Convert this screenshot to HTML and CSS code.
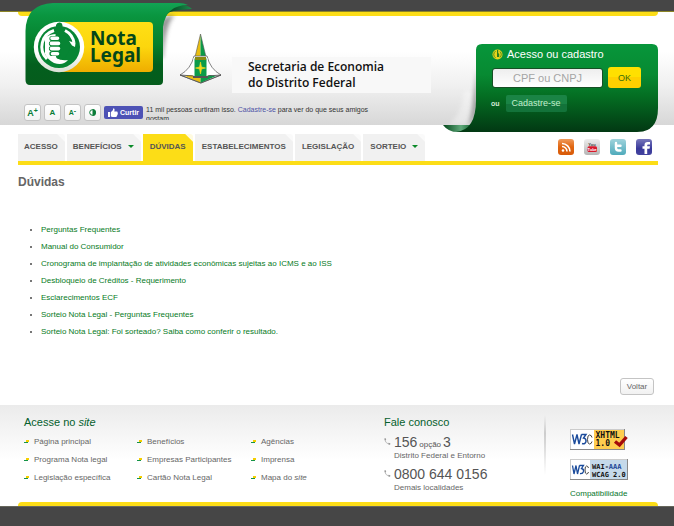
FILE: index.html
```html
<!DOCTYPE html>
<html lang="pt-BR">
<head>
<meta charset="utf-8">
<meta name="viewport" content="width=device-width, initial-scale=1">
<title>Nota Legal - Dúvidas</title>
<link rel="stylesheet" href="styles.css">
</head>
<body>
<div class="bar bar-top"></div>
<header class="header">
  <div class="wrap">
    <div class="strip strip-top"></div>
    <div class="header-main">
      <div class="brand">
        <div class="brand-row">
          <a class="logo" href="#">
            <svg width="172" height="92" viewBox="24 2 172 92" role="img" aria-label="Nota Legal">
              <defs>
                <linearGradient id="lg" x1="0" y1="0" x2="0" y2="1"><stop offset="0" stop-color="#12a354"/><stop offset=".15" stop-color="#0a9640"/><stop offset=".5" stop-color="#067f2c"/><stop offset=".75" stop-color="#035f1e"/><stop offset="1" stop-color="#055c1c"/></linearGradient>
                <linearGradient id="curl" x1="0" y1="0" x2="1" y2="0"><stop offset="0" stop-color="#063d18"/><stop offset=".45" stop-color="#0b5a2c"/><stop offset="1" stop-color="#1c8d4c"/></linearGradient>
                <linearGradient id="yl" x1="0" y1="0" x2="0" y2="1"><stop offset="0" stop-color="#ffe016"/><stop offset=".5" stop-color="#fcd60d"/><stop offset="1" stop-color="#efad00"/></linearGradient>
                <linearGradient id="wh" x1="0" y1="0" x2="0" y2="1"><stop offset=".6" stop-color="#fff"/><stop offset="1" stop-color="#d9e0d5"/></linearGradient>
                <filter id="soft" x="-50%" y="-20%" width="200%" height="140%"><feGaussianBlur stdDeviation="2"/></filter>
              </defs>
              <path d="M161 58V22q2-6 14-7-9 6-12 43z" fill="#666" opacity=".7" filter="url(#soft)"/>
              <path d="M162 24Q163 9 181 5q7 0 11 4-16 1-22 3-6 3-8 12z" fill="url(#curl)"/>
              <path d="M25.500 80V31Q26 4 53 3h126q5 0 9 2-22 0-25 22v54q0 4-4 4H30q-4.500 0-4.500-5z" fill="url(#lg)"/>
              <rect x="58" y="22" width="95" height="50" rx="4" fill="url(#yl)"/>
              <circle cx="59" cy="47" r="25.200" fill="url(#wh)"/>
              <circle cx="59" cy="47" r="21" fill="#078534"/>
              <path d="M54 30.500A17 17 0 0 0 47 59M65 30.500a17 17 0 0 1 9 12.500" fill="none" stroke="#fff" stroke-width="3"/>
              <path d="M69 41l6.500 2-.5 4-3-1.500z" fill="#fff"/>
              <path d="M45 38q4-4 12-4v24q4 3 11 2-5 6-14 3-6-3-9-9z" fill="#fff"/>
              <path d="M56 25q1-3 4-2.500 2.500.5 2.500 3V35q5 2 7 8 1 8-4 14-5 4-9 1l-1-3q4-14 0-19z" fill="#078534"/>
              <path d="M52 38.500h5.500M51.500 43.500h7M51.500 48.500h7M52 53.500h6" stroke="#078534" stroke-width="5.200" stroke-linecap="round"/>
              <path d="M52 38.200h5.500M51.500 43.400h7M51.500 48.600h7M52.500 53.800h5" stroke="#fff" stroke-width="3.600" stroke-linecap="round"/>
              <g class="logo-text"><text x="90" y="45">Nota</text><text x="90" y="62">Legal</text></g>
            </svg>
          </a>
          <svg class="crest" width="42" height="52" viewBox="0 0 42 52" role="img" aria-label="Distrito Federal">
            <path d="M21.500 1L16 24h5.500z" fill="#e9be12"/><path d="M21.500 1L27 24h-5.500z" fill="#0a9b49"/>
            <path d="M21.500 1L16 24M21.500 1L27 24" stroke="#555" stroke-width=".6" fill="none"/>
            <path d="M15 23Q12 36 1 42l20.500 8L42 42Q31 36 28 23z" fill="#fff" stroke="#666" stroke-width=".8"/>
            <path d="M6 43l6-1 9.500 3V50z" fill="#e9be12"/><path d="M37 43l-6-1-9.500 3V50z" fill="#0a9b49"/>
            <path d="M1 42l14 1h13l14-1-20 8z" fill="none" stroke="#555" stroke-width=".9"/>
            <path d="M15 25h13v19H15z" fill="#0a9b49" stroke="#fff" stroke-width="1"/>
            <path d="M16 24h11v3H16z" fill="#8a8a12"/><path d="M14 43h15v2H14z" fill="#555"/>
            <path d="M21.500 29l1 5 4 1-4 1-1 5-1-5-4-1 4-1z" fill="#f3d91a" stroke="#f3d91a" stroke-width=".6"/>
          </svg>
          <p class="agency">Secretaria de Economia<br>do Distrito Federal</p>
        </div>
        <div class="tools">
          <button class="tool" type="button" aria-label="Aumentar fonte"><span class="size-l">A</span><sup>+</sup></button>
          <button class="tool" type="button" aria-label="Fonte normal"><span class="size-m">A</span></button>
          <button class="tool" type="button" aria-label="Diminuir fonte"><span class="size-s">A</span><sup>-</sup></button>
          <button class="tool" type="button" aria-label="Contraste"><svg width="7" height="7" viewBox="0 0 7 7"><circle cx="3.500" cy="3.500" r="2.800" fill="#fff" stroke="#0a7d38" stroke-width="1"/><path d="M3.500 0a3.500 3.500 0 0 1 0 7z" fill="#0a7d38"/></svg></button>
          <button class="like" type="button"><svg width="10" height="9" viewBox="0 0 10 9"><path d="M0 4h2v5H0zM2.800 4.200L5 2V.5Q6.600 0 6.600 1.800L6.300 3.500H9q1 .3.600 1.300.6.700 0 1.500.2.900-.6 1.300 0 1.200-1 1.400H4.600L2.800 8.500z" fill="#fff"/></svg>Curtir</button>
          <p class="like-text">11 mil pessoas curtiram isso. <a href="#">Cadastre-se</a> para ver do que seus amigos gostam.</p>
        </div>
      </div>
      <form class="login">
        <svg class="login-bg" width="216" height="90" viewBox="0 0 216 90" aria-hidden="true">
          <defs>
            <linearGradient id="pg" x1="0" y1="0" x2="0" y2="1"><stop offset="0" stop-color="#07963b"/><stop offset=".35" stop-color="#078a32"/><stop offset=".6" stop-color="#046d22"/><stop offset="1" stop-color="#023813"/></linearGradient>
            <linearGradient id="pc" x1="0" y1="0" x2="1" y2="0"><stop offset="0" stop-color="#02461a"/><stop offset=".6" stop-color="#5fa97a"/><stop offset="1" stop-color="#0e602b"/></linearGradient>
            <filter id="blur" x="-100%" y="-20%" width="300%" height="140%"><feGaussianBlur stdDeviation="2"/></filter>
            <clipPath id="above"><path d="M0 0h40v81H0z"/></clipPath>
          </defs>
          <g clip-path="url(#above)"><path d="M6 81q14-10 16-34h8q0 22-6 34z" fill="#fff" opacity=".35" filter="url(#blur)"/><path d="M35 24v36q-1 14-8 22 4-14 5-30z" fill="#888" filter="url(#blur)"/></g>
          <path d="M1 81h30l-3 7H18Q7 89 1 81z" fill="url(#pc)"/>
          <path d="M34 6q0-6 6-6h170q6 0 6 6v58q0 24-21 24H14q20-2 20-32z" fill="url(#pg)"/>
        </svg>
        <h2 class="login-title"><svg width="11" height="11" viewBox="0 0 11 11" aria-hidden="true"><circle cx="5.500" cy="5.500" r="5" fill="#e9d51b"/><path d="M3.500 2.200a4 4 0 0 0 0 6.600M8 2.600a4 4 0 0 1 0 5.800" fill="none" stroke="#2c7d1e" stroke-width=".8"/><path d="M5 1h1.200v3l1 1v3H5z" fill="#2c7d1e"/></svg><label for="doc">Acesso ou cadastro</label></h2>
        <div class="login-row">
          <input id="doc" class="doc" type="text" placeholder="CPF ou CNPJ">
          <button class="ok" type="submit">OK</button>
        </div>
        <div class="login-alt"><span>ou</span><a class="signup" href="#">Cadastre-se</a></div>
      </form>
    </div>
  </div>
</header>

<div class="wrap">
  <div class="navbar">
    <nav class="tabs">
      <a class="tab" href="#">ACESSO</a>
      <a class="tab has-menu" href="#">BENEFÍCIOS</a>
      <a class="tab current" href="#">DÚVIDAS</a>
      <a class="tab" href="#">ESTABELECIMENTOS</a>
      <a class="tab" href="#">LEGISLAÇÃO</a>
      <a class="tab has-menu" href="#">SORTEIO</a>
    </nav>
    <div class="social">
      <a class="rss" href="#" aria-label="RSS"><svg width="16" height="16" viewBox="0 0 16 16"><circle cx="5" cy="11.500" r="1.300" fill="#fff"/><path d="M4 7.500a5 5 0 0 1 5 5M4 4.500a8 8 0 0 1 8 8" stroke="#fff" stroke-width="1.600" fill="none"/></svg></a>
      <a class="youtube" href="#" aria-label="YouTube"><svg width="16" height="16" viewBox="0 0 16 16"><rect x="3.500" y="7.200" width="9.500" height="5.800" rx="1.500" fill="#d8182b"/><text x="8" y="6.600" class="yt-you">You</text><text x="8.200" y="11.600" class="yt-tube">Tube</text></svg></a>
      <a class="twitter" href="#" aria-label="Twitter"><svg width="16" height="16" viewBox="0 0 16 16"><path d="M6 4v5q0 2.500 2.500 2.500h2M6 6.700h4.500" stroke="#fff" stroke-width="2.400" stroke-linecap="round" fill="none"/></svg></a>
      <a class="facebook" href="#" aria-label="Facebook"><svg width="16" height="16" viewBox="0 0 16 16"><path d="M8.500 15V9.800h-2V7.200h2V6q0-3 3-3H14v2.500h-1.800q-1 0-1 1v.7H14l-.4 2.600h-2.400V15z" fill="#fff"/></svg></a>
    </div>
  </div>

  <main class="content">
    <h1>Dúvidas</h1>
    <ul class="faq">
      <li><a href="#">Perguntas Frequentes</a></li>
      <li><a href="#">Manual do Consumidor</a></li>
      <li><a href="#">Cronograma de implantação de atividades econômicas sujeitas ao ICMS e ao ISS</a></li>
      <li><a href="#">Desbloqueio de Créditos - Requerimento</a></li>
      <li><a href="#">Esclarecimentos ECF</a></li>
      <li><a href="#">Sorteio Nota Legal - Perguntas Frequentes</a></li>
      <li><a href="#">Sorteio Nota Legal: Foi sorteado? Saiba como conferir o resultado.</a></li>
    </ul>
    <button class="back" type="button">Voltar</button>
  </main>
</div>

<footer class="footer">
  <div class="wrap">
    <div class="footer-main">
      <section class="sitemap">
        <h2>Acesse no <em>site</em></h2>
        <ul>
          <li><a href="#">Página principal</a></li>
          <li><a href="#">Benefícios</a></li>
          <li><a href="#">Agências</a></li>
          <li><a href="#">Programa Nota legal</a></li>
          <li><a href="#">Empresas Participantes</a></li>
          <li><a href="#">Imprensa</a></li>
          <li><a href="#">Legislação específica</a></li>
          <li><a href="#">Cartão Nota Legal</a></li>
          <li><a href="#">Mapa do <em>site</em></a></li>
        </ul>
      </section>
      <section class="contact">
        <h2>Fale conosco</h2>
        <div class="phone">
          <svg width="7" height="7" viewBox="0 0 7 7" aria-hidden="true"><path d="M1 .8Q1 5.800 6.200 6" fill="none" stroke="#bbb" stroke-width="1"/><path d="M.3.500l1.500-.3.400 1.600-1.200.6zM4.600 4.800l1.700.4-.3 1.600-1.600-.3z" fill="#999"/></svg>
          <p class="number">156 <small>opção</small> 3</p>
          <p class="place">Distrito Federal e Entorno</p>
        </div>
        <div class="phone">
          <svg width="7" height="7" viewBox="0 0 7 7" aria-hidden="true"><path d="M1 .8Q1 5.800 6.200 6" fill="none" stroke="#bbb" stroke-width="1"/><path d="M.3.500l1.500-.3.400 1.600-1.200.6zM4.600 4.800l1.700.4-.3 1.600-1.600-.3z" fill="#999"/></svg>
          <p class="number">0800 644 0156</p>
          <p class="place">Demais localidades</p>
        </div>
      </section>
      <div class="divider"></div>
      <section class="compat">
        <a href="#"><svg width="58" height="21" viewBox="0 0 58 21" role="img" aria-label="W3C XHTML 1.0">
          <path d="M0 0h55v21H0z" fill="#888"/><path d="M0 0h54v20H0z" fill="#ccc"/><path d="M1 1h23v19H1z" fill="#fff"/><path d="M24 1h30v19H24z" fill="#ffcd4f"/>
          <path d="M2.500 5.500l2 9.500 2.500-9.500 2 9.500 2.500-9.500M11.500 5.500H16l-2.500 3.500q3 .5 2.500 3.500-.8 3-4 2" fill="none" stroke="#1b4b9b" stroke-width="1.400"/><path d="M22 8.500q-.5-2.500-2.500-2.500T17.500 10.500t2 4.500q2 0 2.500-2.500" fill="none" stroke="#444" stroke-width="1"/>
          <text class="badge-text badge-large" x="25.500" y="9">XHTML</text><text class="badge-text badge-large" x="25.500" y="17">1.0</text>
          <path d="M45 12.500l4.500 3.500 7-8" fill="none" stroke="#a40a0a" stroke-width="3.400"/></svg></a>
        <a href="#"><svg width="58" height="21" viewBox="0 0 58 21" role="img" aria-label="W3C WAI-AAA WCAG 2.0">
          <path d="M0 0h58v21H0z" fill="#888"/><path d="M0 0h57v20H0z" fill="#ccc"/><path d="M1 1h19v19H1z" fill="#fff"/><path d="M20 1h37v19H20z" fill="#c5d9ea"/>
          <path d="M2.500 6.500l1.500 8.500 2-8.500 1.500 8.500 2-8.500M9.500 6.500h4L11.500 9.500q2.500.5 2 3-.8 2.500-3.500 2" fill="none" stroke="#1b4b9b" stroke-width="1.300"/><path d="M18.500 9q-.5-2-2-2T15 11t1.500 4q1.500 0 2-2" fill="none" stroke="#444" stroke-width="1"/>
          <text class="badge-text" x="22" y="9.500">WAI-<tspan fill="#1b4596">AAA</tspan></text><text class="badge-text" x="22" y="17.500">WCAG 2.0</text></svg></a>
        <a class="compat-link" href="#">Compatibilidade</a>
      </section>
    </div>
    <div class="strip strip-bottom"></div>
  </div>
  <div class="bar bar-bottom"></div>
</footer>
</body>
</html>
```
FILE: styles.css
```css
* { box-sizing: border-box; }
body {
  margin: 0;
  background: #fff;
  color: #666;
  font: 8px/17px "Liberation Sans", Arial, sans-serif;
}
h1, h2, p, ul { margin: 0; padding: 0; }
ul { list-style: none; }
a { color: inherit; text-decoration: none; }
button, input { margin: 0; padding: 0; font-family: inherit; }
svg { display: block; flex: none; overflow: visible; }
.wrap { padding: 0 16px 0 18px; }

/* page edges */
.bar { background: #464646; }
.bar-top { height: 12px; border-bottom: 1px solid #8c8526; }
.bar-bottom { height: 20px; border-top: 1px solid #66665c; }
.strip { height: 4px; background: #fcdd17; }
.strip-top { border-radius: 0 0 4px 4px; }
.strip-bottom { border-radius: 4px 4px 0 0; }

/* header */
.header { background: linear-gradient(#fff 35%, #f0f0f0 65%, #d7d7d7); }
.header-main { display: flex; justify-content: space-between; align-items: flex-start; }
.brand { padding: 0 0 4px 6px; }
.brand-row { display: flex; height: 88px; }
.logo { width: 155px; margin-top: -14px; }
.logo-text { fill: #04471a; font: bold 19px/17px "Noto Sans", sans-serif; }
.crest { margin-top: 17px; }
.agency {
  width: 199px;
  height: 36px;
  margin: 41px 0 0 11px;
  padding: 2px 16px;
  background: #f8f8f8;
  color: #111;
  font: 600 12px/16px "Open Sans", sans-serif;
}
.tools { display: flex; align-items: center; gap: 3px; }
.tool {
  display: flex;
  align-items: center;
  justify-content: center;
  width: 17px;
  height: 17px;
  border: 1px solid #c4c4c4;
  border-radius: 3px;
  background: linear-gradient(#fff, #f3f3f3);
  color: #0a7d38;
  font-weight: bold;
}
.tool sup { font-size: 7px; line-height: 11px; align-self: flex-start; }
.size-l { font-size: 9px; }
.size-m { font-size: 8px; }
.size-s { font-size: 7px; }
.like {
  display: flex;
  align-items: center;
  gap: 2px;
  height: 13px;
  padding: 0 4px;
  border: 0;
  border-radius: 2px;
  background: #4d52b5;
  color: #fff;
  font-size: 7px;
  font-weight: bold;
}
.like-text { width: 240px; height: 15px; overflow: hidden; color: #333; font-size: 7px; line-height: 9px; }
.like-text a { color: #4d52a5; }

/* login panel */
.login { position: relative; z-index: 1; width: 182px; margin: 28px 0 -8px; padding: 3px 16px 20px; }
.login-bg { position: absolute; right: 0; top: 0; z-index: -1; }
.login-title { display: flex; align-items: center; gap: 4px; color: #fff; font-size: 11px; font-weight: normal; line-height: 15px; }
.login-row { display: flex; align-items: center; gap: 5px; margin-top: 5px; }
.doc {
  width: 111px;
  height: 20px;
  border: 1px solid #174f25;
  border-radius: 3px;
  background: linear-gradient(#eee, #fff);
  color: #444;
  font-size: 11px;
  text-align: center;
}
.doc::placeholder { color: #a5a5a5; }
.ok { width: 33px; height: 21px; border: 0; border-radius: 3px; background: linear-gradient(#ffe000 50%, #ffd000 50%); color: #3a6f0a; font-size: 9px; }
.login-alt { display: flex; align-items: center; gap: 6px; margin: 7px -1px 0; color: #d5ecd9; font-weight: bold; font-size: 7px; }
.signup { padding: 0 6px; border-radius: 2px; background: linear-gradient(#1a8445 50%, #13733a 50%); color: #c2efcd; font-size: 9px; font-weight: normal; }

/* navigation */
.navbar { display: flex; justify-content: space-between; margin-top: 9px; border-bottom: 4px solid #fcdd17; }
.tabs { display: flex; gap: 2px; }
.tab {
  padding: 4px 7px 6px 6px;
  background: linear-gradient(225deg, #fafafa 5px, #f1f1f1 6px);
  border-top-right-radius: 3px;
  color: #555;
  font-weight: bold;
}
.tab.current, .tab.current ~ .tab { padding-left: 7px; }
.tab.current { background: linear-gradient(225deg, #fffbe0 5px, #fcdd17 6px); }
.has-menu::after { content: ""; display: inline-block; margin-left: 6px; border: 3px solid transparent; border-top-color: #0a8a28; border-bottom: 0; vertical-align: middle; }
.social { display: flex; gap: 10px; padding: 5px 6px 0 0; }
.social a { width: 16px; height: 16px; border-radius: 3px; }
.rss { background: linear-gradient(#f09a5a, #e06510 50%, #d85a08); }
.youtube { background: linear-gradient(#eee, #b5b5b5); }
.twitter { background: linear-gradient(#9fd3dc, #4faabb); }
.facebook { background: linear-gradient(#7777bb, #39399a 60%, #44449f); }
.yt-you, .yt-tube { font: bold 4px/4px "Liberation Sans", sans-serif; text-anchor: middle; fill: #444; }
.yt-tube { fill: #fff; }

/* content */
.content { padding: 8px 4px 10px 0; }
h1 { font-size: 12px; line-height: 18px; }
.faq { margin: 30px 0 38px 12px; }
.faq li { display: flex; align-items: center; gap: 9px; color: #067a1c; }
.faq li::before { content: ""; width: 2px; height: 2px; background: #777; }
.back {
  display: block;
  width: 34px;
  height: 17px;
  margin-left: auto;
  border: 1px solid #c4c4c4;
  border-radius: 3px;
  background: linear-gradient(#fff, #f1f1f1);
  color: #666;
  font-size: 8px;
}

/* footer */
.footer { background: linear-gradient(#ebebeb, #fff 55px); }
.footer-main { display: flex; height: 97px; padding: 10px 0 0 6px; }
.footer h2 { color: #05602d; font-size: 11px; font-weight: normal; line-height: 15px; }
.sitemap { width: 360px; }
.sitemap ul { display: grid; grid-template-columns: 113px 114px 1fr; margin-top: 3px; row-gap: 1px; }
.sitemap li { display: flex; align-items: center; gap: 5px; }
.sitemap li::before {
  content: "";
  width: 5px;
  height: 3px;
  background: linear-gradient(#f4cf00, #f4cf00) 2px 0 / 3px 2px no-repeat, linear-gradient(#159447, #159447) 0 2px / 4px 1px no-repeat;
}
.contact { width: 160px; }
.phone { display: grid; grid-template-columns: 7px 1fr; column-gap: 3px; margin-bottom: 2px; }
.phone svg { margin-top: 8px; }
.phone p { grid-column: 2; }
.phone .number { grid-row: 1; padding-top: 3px; color: #555; font-size: 14px; line-height: 18px; }
.number small { margin: 0 -2px; font-size: 8px; line-height: 8px; }
.phone .place { line-height: 9px; }
.divider { width: 2px; height: 60px; background: linear-gradient(#fff0, #ccc 30%, #fff0); }
.compat { padding: 14px 0 0 24px; }
.compat a { display: block; margin-bottom: 9px; }
.compat .compat-link { margin: -4px 0 0; color: #06752c; }
.badge-text { font: bold 7px/8px "DejaVu Sans Mono", monospace; fill: #111; }
.badge-large { font-size: 8px; }
```
